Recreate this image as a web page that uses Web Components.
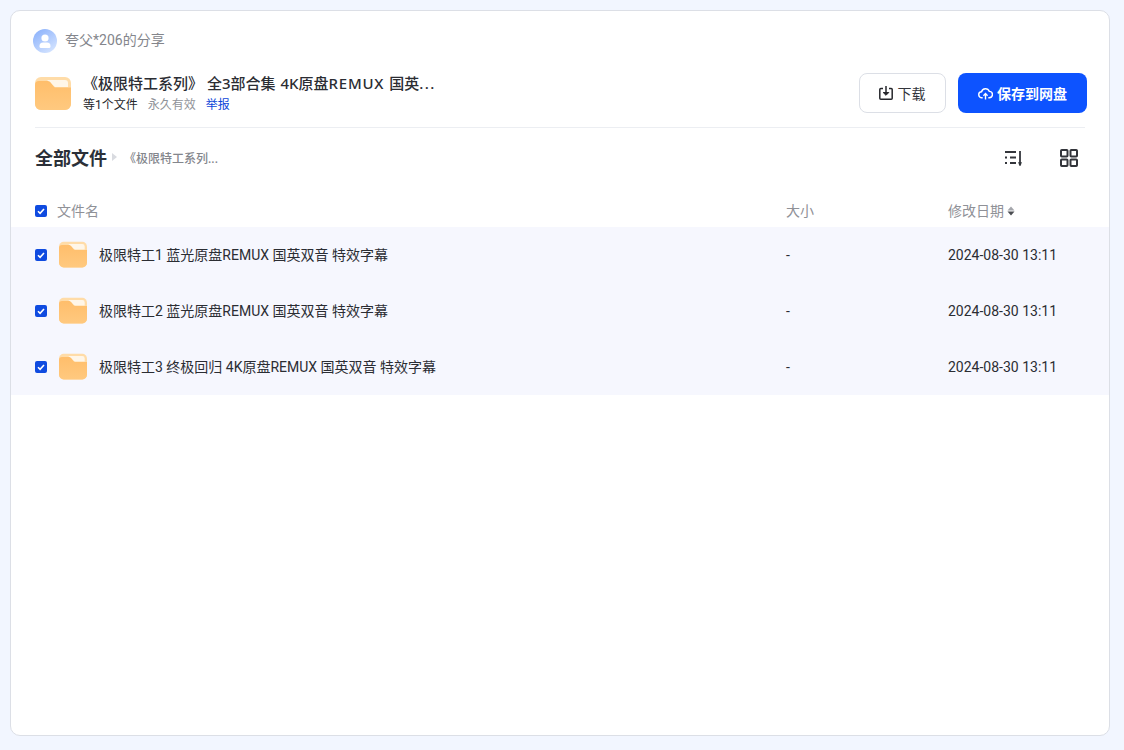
<!DOCTYPE html>
<html lang="zh">
<head>
<meta charset="utf-8">
<title>分享</title>
<style>
  html, body { margin: 0; height: 100%; }
  body {
    background: #f2f6ff;
    font-family: Roboto, "Noto Sans CJK SC", sans-serif;
    color: #25262b;
  }
</style>
</head>
<body>
<share-page>
  <share-header slot="header"></share-header>
  <crumb-bar slot="crumbs"></crumb-bar>
  <file-table slot="table">
    <file-row name="极限特工1 蓝光原盘REMUX 国英双音 特效字幕" size="-" date="2024-08-30 13:11"></file-row>
    <file-row name="极限特工2 蓝光原盘REMUX 国英双音 特效字幕" size="-" date="2024-08-30 13:11"></file-row>
    <file-row name="极限特工3 终极回归 4K原盘REMUX 国英双音 特效字幕" size="-" date="2024-08-30 13:11"></file-row>
  </file-table>
</share-page>
<script>
  const folderSvg = (size) => `
    <svg width="${size}" height="${size}" viewBox="0 0 36 36" aria-hidden="true">
      <defs>
        <linearGradient id="f" x1="0" y1="0" x2="0" y2="1">
          <stop offset="0" stop-color="#ffbe6b"/>
          <stop offset="1" stop-color="#ffc97f"/>
        </linearGradient>
      </defs>
      <rect x="0" y="1" width="36" height="33" rx="6" fill="#ffdca8"/>
      <path d="M12 4H30a3 3 0 0 1 3 3v4H20z" fill="#fff6e8"/>
      <path d="M0 9a4 4 0 0 1 4-4h8.500c1.500 0 2.500.7 3.300 1.800l2.700 3.400c.6.800 1.400 1.300 2.500 1.300H36V28a6 6 0 0 1-6 6H6a6 6 0 0 1-6-6z" fill="url(#f)"/>
    </svg>`

  const checkBox = `
    <svg width="12" height="12" viewBox="0 0 12 12" aria-hidden="true">
      <rect width="12" height="12" rx="2" fill="#0f4be0"/>
      <path d="M3 6.200 5.100 8.300 9 4" fill="none" stroke="#fff" stroke-width="1.600"/>
    </svg>`

  customElements.define('share-page',
    /**
     * The white card that holds everything.
     */
    class extends HTMLElement {
      constructor () {
        super()
        this.attachShadow({ mode: 'open' }).innerHTML = `
          <style>
            :host { display: block; box-sizing: border-box; height: 100vh; padding: 10px 14px 14px 10px; }
            .card {
              box-sizing: border-box;
              height: 100%;
              background: #fff;
              border: 1px solid #dcdfe6;
              border-radius: 10px;
              overflow: hidden;
            }
          </style>
          <div class="card">
            <slot name="header"></slot>
            <slot name="crumbs"></slot>
            <slot name="table"></slot>
          </div>`
      }
    })

  customElements.define('share-header',
    /**
     * Sharer line, share title and the two action buttons.
     */
    class extends HTMLElement {
      constructor () {
        super()
        this.attachShadow({ mode: 'open' }).innerHTML = `
          <style>
            :host { display: block; padding: 18px 24px 0 24px; }
            .sharer { display: flex; align-items: center; gap: 8px; height: 24px; font-size: 14px; line-height: 22px; color: #84868c; margin-left: -2px; }
            .sharer span { padding-bottom: 2px; }
            .main { display: flex; align-items: center; margin-top: 20px; height: 40px; padding-bottom: 14px; border-bottom: 1px solid #eceef2; }
            .folder { display: flex; margin-right: 12px; margin-top: 1px; }
            .info { flex: 1; min-width: 0; }
            .title { font-family: "Noto Sans", "Noto Sans CJK SC", sans-serif; font-size: 15px; line-height: 20px; font-weight: 500; color: #2b2d33; white-space: nowrap; margin-top: -1px; }
            .title .rest { word-spacing: 1px; }
            .title b { font-weight: 500; letter-spacing: .8px; }
            .title i { font-style: normal; letter-spacing: 1.500px; }
            .meta { display: flex; gap: 10px; font-size: 12px; line-height: 16px; margin-top: 4px; color: #25262b; }
            .meta .muted { color: #909399; }
            .meta a { color: #0d47d9; }
            .btn {
              box-sizing: border-box;
              display: flex;
              align-items: center;
              justify-content: center;
              height: 40px;
              border-radius: 8px;
              font-size: 14px;
              font-weight: 500;
            }
            .download { width: 87px; border: 1px solid #dcdfe6; gap: 4px; color: #33353b; font-weight: 400; }
            .save { width: 129px; margin-left: 12px; margin-right: -2px; background: #0d53ff; color: #fff; gap: 4px; font-weight: 700; }
          </style>
          <div class="sharer">
            <svg width="24" height="24" viewBox="0 0 24 24" aria-hidden="true">
              <defs>
                <linearGradient id="a" x1="0" y1="0" x2=".7" y2="1">
                  <stop offset="0" stop-color="#86aefb"/>
                  <stop offset="1" stop-color="#d2e2ff"/>
                </linearGradient>
              </defs>
              <circle cx="12" cy="12" r="12" fill="url(#a)"/>
              <circle cx="12" cy="9" r="3.600" fill="#fff"/>
              <path d="M6.500 17a3.500 3.500 0 0 1 3.500-3.500h4a3.500 3.500 0 0 1 3.500 3.500v.5a1.500 1.500 0 0 1-1.500 1.500H8a1.500 1.500 0 0 1-1.500-1.500z" fill="#fff"/>
            </svg>
            <span>夸父*206的分享</span>
          </div>
          <div class="main">
            <div class="folder">${folderSvg(36)}</div>
            <div class="info">
              <div class="title">《极限特工系列》 全3部合集<span class="rest"> 4K原盘<b>REMUX</b> 国英</span><i>...</i></div>
              <div class="meta"><span>等1个文件</span><span class="muted">永久有效</span><a>举报</a></div>
            </div>
            <div class="btn download">
              <svg width="16" height="16" viewBox="0 0 16 16" fill="none" stroke="#25262b" stroke-width="1.500" style="margin-left:-2px" aria-hidden="true">
                <path d="M5 3.500H2.800a1 1 0 0 0-1 1v8.700a1 1 0 0 0 1 1h10.400a1 1 0 0 0 1-1V4.500a1 1 0 0 0-1-1H11"/>
                <path d="M8 1v8"/>
                <path d="M5.200 7.500 8 10.300l2.800-2.800z" fill="#25262b" stroke-width="1"/>
              </svg>
              <span>下载</span>
            </div>
            <div class="btn save">
              <svg width="15" height="15" viewBox="0 0 16 16" fill="none" stroke="#fff" stroke-width="1.500" aria-hidden="true">
                <path d="M5 12.500H4.200A3.200 3.200 0 0 1 3.800 6.100 4.300 4.300 0 0 1 12 5.700a3.400 3.400 0 0 1 0 6.800h-1"/>
                <path d="M8 14.500V8.500"/>
                <path d="M5.800 10.300 8 8l2.200 2.300"/>
              </svg>
              <span>保存到网盘</span>
            </div>
          </div>`
      }
    })

  customElements.define('crumb-bar',
    /**
     * "All files" heading with its breadcrumb and the view icons.
     */
    class extends HTMLElement {
      constructor () {
        super()
        this.attachShadow({ mode: 'open' }).innerHTML = `
          <style>
            :host { display: flex; align-items: center; height: 60px; padding: 0 31px 0 24px; }
            .all { font-size: 18px; font-weight: 700; color: #2b3038; padding-bottom: 2px; }
            .arrow { width: 0; height: 0; border-left: 5px solid #d9dbe0; border-top: 4px solid transparent; border-bottom: 4px solid transparent; margin: -2px 7px 0 5px; }
            .crumb { flex: 1; font-size: 12px; font-weight: 500; color: #84868c; padding-bottom: 2px; }
            .tools { display: flex; gap: 36px; align-items: center; }
            svg { display: block; }
          </style>
          <span class="all">全部文件</span>
          <span class="arrow"></span>
          <span class="crumb">《极限特工系列...</span>
          <div class="tools">
            <svg width="20" height="20" viewBox="0 0 20 20" fill="none" stroke="#33353b" stroke-width="1.800" aria-hidden="true">
              <path d="M1 4h11M1 9.500h2M6 9.500h6M1 15h2M6 15h6"/>
              <path d="M16 3v14" stroke-width="1.800"/>
              <path d="M14.500 14.500 16 18l1.500-3.500z" fill="#33353b" stroke-width=".6"/>
            </svg>
            <svg width="18" height="18" viewBox="0 0 18 18" fill="none" stroke="#33353b" stroke-width="2" aria-hidden="true">
              <rect x="1" y="1" width="6.500" height="6.500" rx=".8"/>
              <rect x="10.500" y="1" width="6.500" height="6.500" rx=".8"/>
              <rect x="1" y="10.500" width="6.500" height="6.500" rx=".8"/>
              <rect x="10.500" y="10.500" width="6.500" height="6.500" rx=".8"/>
            </svg>
          </div>`
      }
    })

  customElements.define('file-table',
    /**
     * Column headings, with the rows slotted in below them.
     */
    class extends HTMLElement {
      constructor () {
        super()
        this.attachShadow({ mode: 'open' }).innerHTML = `
          <style>
            :host { display: block; padding-top: 6px; }
            .head {
              display: grid;
              grid-template-columns: 751px 162px 1fr;
              align-items: center;
              height: 33px;
              padding-left: 24px;
              font-size: 14px;
              color: #8f9197;
            }
            .head span, .size { padding-bottom: 2px; }
            .name { display: flex; align-items: center; gap: 10px; }
            svg { display: block; }
            .date { display: flex; align-items: center; gap: 3px; }
          </style>
          <div class="head">
            <div class="name">${checkBox}<span>文件名</span></div>
            <div class="size">大小</div>
            <div class="date">
              <span>修改日期</span>
              <svg width="8" height="10" viewBox="0 0 8 10" aria-hidden="true">
                <path d="M4 .5 7.500 4.500H.5z" fill="#a4a6ab"/>
                <path d="M4 9.500 7.500 5.500H.5z" fill="#4a4c51"/>
              </svg>
            </div>
          </div>
          <slot></slot>`
      }
    })

  customElements.define('file-row',
    /**
     * One selected folder row; reads its cells from attributes.
     */
    class extends HTMLElement {
      connectedCallback () {
        this.attachShadow({ mode: 'open' }).innerHTML = `
          <style>
            :host {
              display: grid;
              grid-template-columns: 751px 162px 1fr;
              align-items: center;
              height: 56px;
              padding-left: 24px;
              background: #f6f7fe;
              font-size: 14px;
              color: #2b2d33;
            }
            .name { display: flex; align-items: center; }
            .check { display: flex; margin-right: 12px; }
            .folder { display: flex; margin-right: 12px; }
            .text { padding-bottom: 2px; }
          </style>
          <div class="name">
            <span class="check">${checkBox}</span>
            <span class="folder">${folderSvg(28)}</span>
            <span class="text">${this.getAttribute('name')}</span>
          </div>
          <div>${this.getAttribute('size')}</div>
          <div>${this.getAttribute('date')}</div>`
      }
    })
</script>
</body>
</html>
